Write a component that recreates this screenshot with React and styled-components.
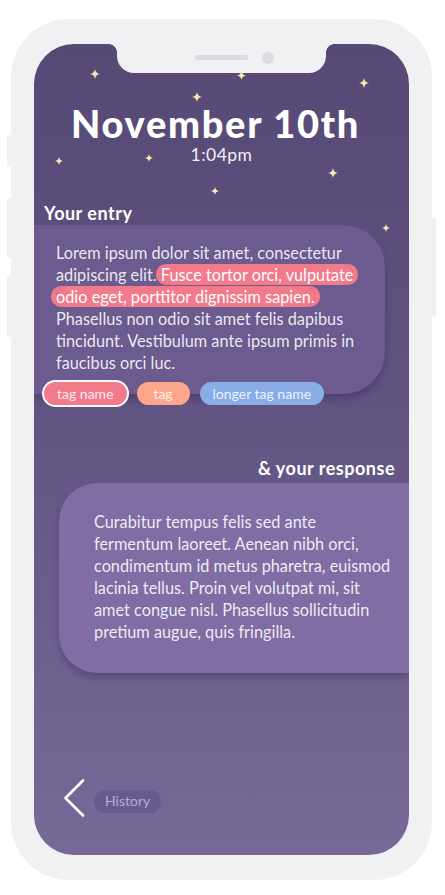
import React from "react";
import styled, { createGlobalStyle } from "styled-components";

const Global = createGlobalStyle`
  html, body { margin: 0; padding: 0; background: #ffffff; }
  body { font-family: Lato, "Noto Sans", sans-serif; -webkit-font-smoothing: antialiased; }
  * { box-sizing: border-box; }
`;

const FRAME = "#f1f1f3";

const Page = styled.div`
  width: 445px;
  height: 895px;
  padding: 19px 0 0 11px;
`;

const Phone = styled.div`
  position: relative;
  width: 421px;
  height: 861px;
  background: ${FRAME};
  border-radius: 58px;
  padding: 25px 23px;
`;

const SideButton = styled.div`
  position: absolute;
  top: ${(p) => p.$top}px;
  height: ${(p) => p.$h}px;
  width: 5px;
  background: ${FRAME};
  border-radius: 3px;
  ${(p) => (p.$right ? "right: -4px;" : "left: -4px;")}
`;

const Screen = styled.div`
  position: relative;
  width: 375px;
  height: 811px;
  border-radius: 40px;
  overflow: hidden;
  background: linear-gradient(180deg, #564975 0%, #615382 45%, #786a98 100%);
  display: flex;
  flex-direction: column;
  color: #fff;
`;

const Notch = styled.div`
  position: absolute;
  top: 0;
  left: 83px;
  width: 209px;
  height: 29px;
  background: ${FRAME};
  border-radius: 0 0 17px 17px;
  display: flex;
  align-items: center;
  gap: 14px;
  padding: 0 0 2px 78px;
  z-index: 3;
  &::before, &::after {
    content: "";
    position: absolute;
    top: 0;
    width: 8px;
    height: 8px;
  }
  &::before {
    left: -8px;
    background: radial-gradient(circle at 0 100%, transparent 7.5px, ${FRAME} 8px);
  }
  &::after {
    right: -8px;
    background: radial-gradient(circle at 100% 100%, transparent 7.5px, ${FRAME} 8px);
  }
`;

const Speaker = styled.div`
  width: 53px;
  height: 5px;
  border-radius: 3px;
  background: #dcdce2;
`;

const Camera = styled.div`
  width: 12px;
  height: 12px;
  border-radius: 50%;
  background: #dcdce2;
`;

const StarWrap = styled.svg`
  position: absolute;
  left: ${(p) => p.$x - p.$s / 2}px;
  top: ${(p) => p.$y - p.$s / 2}px;
  width: ${(p) => p.$s}px;
  height: ${(p) => p.$s}px;
  z-index: 1;
`;

const Star = ({ x, y, s }) => (
  <StarWrap $x={x} $y={y} $s={s} viewBox="0 0 10 10">
    <path d="M5 0 Q5.7 4.3 10 5 Q5.7 5.7 5 10 Q4.3 5.7 0 5 Q4.3 4.3 5 0Z" fill="#f8e7a6" />
  </StarWrap>
);

const Header = styled.header`
  position: relative;
  z-index: 2;
  display: flex;
  flex-direction: column;
  align-items: center;
  padding-top: 57px;
`;

const Title = styled.h1`
  margin: 0;
  font-family: Lato, sans-serif;
  font-weight: 900;
  font-size: 38px;
  line-height: 44px;
  letter-spacing: 1.7px;
  color: #ffffff;
  padding-right: 12px;
`;

const Time = styled.div`
  margin-top: 0px;
  font-size: 17.5px;
  line-height: 20px;
  letter-spacing: 0.5px;
  color: #f4f1f8;
`;

const Label = styled.h2`
  position: relative;
  z-index: 2;
  margin: 0;
  font-size: 18px;
  line-height: 20px;
  font-weight: 700;
  letter-spacing: 0.5px;
  color: #ffffff;
  text-align: ${(p) => (p.$right ? "right" : "left")};
  padding: ${(p) => (p.$right ? "0 14px 0 0" : "0 0 0 10px")};
  margin-top: ${(p) => p.$mt}px;
`;

const EntryCard = styled.section`
  position: relative;
  z-index: 2;
  margin-top: 2px;
  width: 351px;
  background: #6b5b8e;
  border-radius: 0 42px 42px 0;
  padding: 17px 25px 20px 22px;
  box-shadow: 0 5px 6px rgba(45, 33, 75, 0.35);
`;

const Body = styled.p`
  margin: 0;
  font-size: 16.3px;
  line-height: 22px;
  color: rgba(255, 255, 255, 0.88);
`;

const Mark = styled.span`
  background: #f27a8b;
  color: #fff;
  border-radius: 10px;
  padding: 1px 0;
  box-shadow: 5px 0 0 #f27a8b, -5px 0 0 #f27a8b;
  -webkit-box-decoration-break: clone;
  box-decoration-break: clone;
`;

const Tags = styled.div`
  position: relative;
  z-index: 3;
  display: flex;
  gap: 10px;
  padding-left: 10px;
  margin-top: -12px;
`;

const Tag = styled.span`
  display: inline-flex;
  align-items: center;
  justify-content: center;
  height: 23px;
  min-width: 53px;
  padding: 0 13px 1px;
  border-radius: 12px;
  background: ${(p) => p.$bg};
  color: rgba(255, 255, 255, 0.88);
  font-size: 14px;
  ${(p) => (p.$active ? "box-shadow: 0 0 0 2px #ffffff;" : "")}
`;

const ResponseCard = styled.section`
  position: relative;
  z-index: 2;
  margin: 5px 0 0 25px;
  background: #7f6da4;
  border-radius: 38px 0 0 38px;
  padding: 28px 14px 30px 35px;
  box-shadow: 0 5px 6px rgba(45, 33, 75, 0.3);
`;

const Footer = styled.nav`
  margin-top: auto;
  display: flex;
  align-items: center;
  gap: 9px;
  padding: 0 0 38px 29px;
`;

const History = styled.span`
  display: inline-flex;
  align-items: center;
  height: 23px;
  padding: 0 11px 1px;
  border-radius: 12px;
  background: rgba(92, 76, 132, 0.45);
  color: #b5abcd;
  font-size: 14px;
  margin-top: 6px;
`;

const stars = [
  { x: 61, y: 30, s: 10 },
  { x: 207, y: 31, s: 9 },
  { x: 330, y: 39, s: 10 },
  { x: 163, y: 53, s: 10 },
  { x: 25, y: 117, s: 8 },
  { x: 115, y: 114, s: 8 },
  { x: 299, y: 129, s: 10 },
  { x: 181, y: 147, s: 8 },
  { x: 352, y: 184, s: 8 },
];

export default function App() {
  return (
    <Page>
      <Global />
      <Phone>
        <SideButton $top={116} $h={32} />
        <SideButton $top={179} $h={60} />
        <SideButton $top={256} $h={62} />
        <SideButton $right $top={199} $h={99} />
        <Screen>
          <Notch>
            <Speaker />
            <Camera />
          </Notch>
          {stars.map((s, i) => (
            <Star key={i} {...s} />
          ))}
          <Header>
            <Title>November 10th</Title>
            <Time>1:04pm</Time>
          </Header>
          <Label $mt={38}>Your entry</Label>
          <EntryCard>
            <Body>
              Lorem ipsum dolor sit amet, consectetur adipiscing elit.{" "}
              <Mark>Fusce tortor orci, vulputate odio eget, porttitor dignissim sapien.</Mark>{" "}
              Phasellus non odio sit amet felis dapibus tincidunt. Vestibulum ante ipsum primis in
              faucibus orci luc.
            </Body>
          </EntryCard>
          <Tags>
            <Tag $bg="#f27a8b" $active>tag name</Tag>
            <Tag $bg="#fea68b">tag</Tag>
            <Tag $bg="#89ade6">longer tag name</Tag>
          </Tags>
          <Label $right $mt={53}>&amp; your response</Label>
          <ResponseCard>
            <Body>
              Curabitur tempus felis sed ante fermentum laoreet. Aenean nibh orci, condimentum id
              metus pharetra, euismod lacinia tellus. Proin vel volutpat mi, sit amet congue nisl.
              Phasellus sollicitudin pretium augue, quis fringilla.
            </Body>
          </ResponseCard>
          <Footer>
            <svg width="22" height="38" viewBox="0 0 22 38" fill="none">
              <path d="M20 1.5 L2.5 19 L20 36.5" stroke="#ffffff" strokeWidth="2.6" strokeLinecap="round" strokeLinejoin="round" />
            </svg>
            <History>History</History>
          </Footer>
        </Screen>
      </Phone>
    </Page>
  );
}
